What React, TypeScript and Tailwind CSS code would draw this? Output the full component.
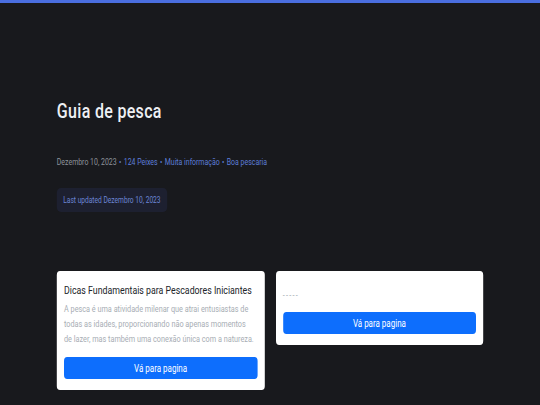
import React from "react";

const meta = ["124 Peixes", "Muita informação", "Boa pescaria"];

// the whole page is drawn narrow (condensed look), so inner sizes are pre-scale
const Card = ({ title, text }: { title?: string; text: string }) => {
  return (
    <div className="bg-white rounded-[4px] px-[9px] pt-[11px] pb-[11px] flex flex-col">
      {title && (
        <h2 className="mt-[2px] text-[11px] leading-[14px] text-[#212529]">{title}</h2>
      )}
      <p
        className={`text-[9.1px] leading-[15px] text-[#a7adb4] ${
          title ? "mt-[4px] pr-[3px]" : "mt-[6px] tracking-[1.5px]"
        }`}
      >
        {text}
      </p>
      <button
        className={`h-[22px] rounded-[4px] bg-[#0d6efd] text-white text-[10px] ${
          title ? "mt-[10px]" : "mt-[9px]"
        }`}
      >
        Vá para pagina
      </button>
    </div>
  );
};

const App = () => {
  return (
    <div className="w-[540px] min-h-[405px] overflow-hidden bg-[#18191d] border-t-[3px] border-[#4a6ee0]">
      <div
        className="w-[675px] origin-left scale-x-[0.8]"
        style={{ fontFamily: "Roboto, 'Noto Sans', sans-serif" }}
      >
        <div className="w-[533px] mx-auto pt-[94px]">
          <h1 className="text-[20px] leading-[28px] font-medium text-[#eef0f4] tracking-[0.02em]">
            Guia de pesca
          </h1>
          <div className="mt-[31px] flex items-center text-[8.7px]">
            <span className="text-[#8e939b]">Dezembro 10, 2023</span>
            {meta.map((m) => (
              <span key={m} className="text-[#5d7ed9] flex items-center">
                <span className="mx-[3px]">•</span>
                {m}
              </span>
            ))}
          </div>
          <div className="mt-[19px] inline-flex h-[24px] items-center px-[8px] rounded-[5px] bg-[#1d2030] text-[#6c86d6] text-[8.3px]">
            Last updated Dezembro 10, 2023
          </div>
          <div className="mt-[59px] grid grid-cols-2 gap-[14px] items-start">
            <Card
              title="Dicas Fundamentais para Pescadores Iniciantes"
              text="A pesca é uma atividade milenar que atrai entusiastas de todas as idades, proporcionando não apenas momentos de lazer, mas também uma conexão única com a natureza."
            />
            <Card text="-----" />
          </div>
        </div>
      </div>
    </div>
  );
};

export default App;
